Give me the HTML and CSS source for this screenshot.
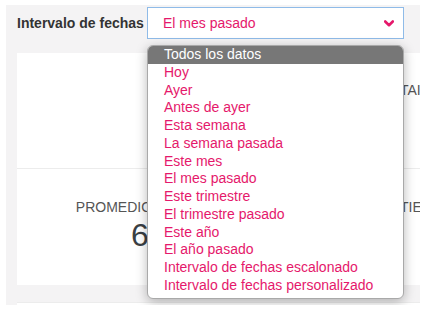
FILE: index.html
```html
<!DOCTYPE html>
<html>
<head>
    <title>Informe</title>
    <link rel="stylesheet" href="styles.css">
</head>
<body>
    <div class="panel">
        <div class="filter">
            <div class="filter-label">Intervalo de fechas</div>
            <div class="select">
                <span class="select-value">El mes pasado</span>
                <svg class="chevron" width="10" height="7" viewBox="0 0 10 7">
                    <path d="M1.2 1.5 L5 5.2 L8.8 1.5" fill="none" stroke="#e5186b" stroke-width="2.6" stroke-linecap="round" stroke-linejoin="round"/>
                </svg>
                <!-- open option list -->
                <ul class="options">
                    <li class="option active">Todos los datos</li>
                    <li class="option">Hoy</li>
                    <li class="option">Ayer</li>
                    <li class="option">Antes de ayer</li>
                    <li class="option">Esta semana</li>
                    <li class="option">La semana pasada</li>
                    <li class="option">Este mes</li>
                    <li class="option">El mes pasado</li>
                    <li class="option">Este trimestre</li>
                    <li class="option">El trimestre pasado</li>
                    <li class="option">Este año</li>
                    <li class="option">El año pasado</li>
                    <li class="option">Intervalo de fechas escalonado</li>
                    <li class="option">Intervalo de fechas personalizado</li>
                </ul>
            </div>
        </div>

        <div class="card">
            <div class="card-row">
                <div class="stat stat-main"></div>
                <div class="stat stat-side">
                    <div class="stat-label">TAI</div>
                </div>
            </div>
            <div class="card-row">
                <div class="stat stat-main">
                    <div class="stat-label">PROMEDIO DIARIO</div>
                    <div class="stat-value">6</div>
                </div>
                <div class="stat stat-side">
                    <div class="stat-label">TIEMPO PROMEDIO</div>
                </div>
            </div>
        </div>

        <div class="card card-next"></div>
    </div>
</body>
</html>
```

FILE: styles.css
```css
body {
    margin: 0;
    background-color: #fff;
    font-family: "Liberation Sans", Arial, sans-serif;
}
.panel {
    width: 414px;
    height: 300px;
    margin: 5px 0 0 6px;
    padding: 2px 0 0 11px;
    box-sizing: border-box;
    background-color: #f4f3f4;
    overflow: hidden;
}
.filter {
    display: flex;
    align-items: center;
}
.filter-label {
    width: 130px;
    font-size: 14px;
    font-weight: bold;
    color: #333;
}
.select {
    position: relative;
    width: 257px;
    height: 32px;
    padding: 0 5px 0 15px;
    box-sizing: border-box;
    display: flex;
    align-items: center;
    justify-content: space-between;
    background-color: #fff;
    border: 1px solid #8fbbe8;
    font-size: 14px;
    color: #e5186b;
}
.chevron {
    margin-right: 4px;
}
.options {
    position: absolute;
    top: 37px;
    left: -1px;
    width: 257px;
    margin: 0;
    padding: 0 0 3px 0;
    box-sizing: border-box;
    list-style: none;
    background-color: #fff;
    border: 1px solid #a9a9a9;
    border-radius: 6px;
    box-shadow: 0 3px 12px rgba(0, 0, 0, 0.28);
    z-index: 10;
}
.option {
    height: 17.75px;
    line-height: 17.75px;
    padding-left: 16px;
    font-size: 14px;
    color: #e5186b;
    white-space: nowrap;
}
.option.active {
    background-color: #777;
    color: #fff;
    border-radius: 5px 5px 0 0;
}
.card {
    width: 560px;
    margin-top: 14px;
    background-color: #fff;
}
.card-row {
    display: flex;
    height: 115px;
    border-bottom: 1px solid #ececec;
}
.card-row:last-child {
    height: 116px;
    border-bottom: none;
}
.stat {
    padding-top: 29px;
    box-sizing: border-box;
    color: #555;
}
.card-row:last-child .stat {
    padding-top: 30px;
}
.stat-main {
    width: 246px;
    text-align: center;
}
.stat-side {
    padding-left: 137px;
}
.stat-label {
    font-size: 14px;
    line-height: 16px;
    white-space: nowrap;
}
.stat-value {
    margin-top: 2px;
    font-size: 32px;
    line-height: 37px;
    color: #3a3f44;
}
.card-next {
    height: 40px;
    margin-top: 17px;
    border-top: 1px solid #ececec;
}
```
